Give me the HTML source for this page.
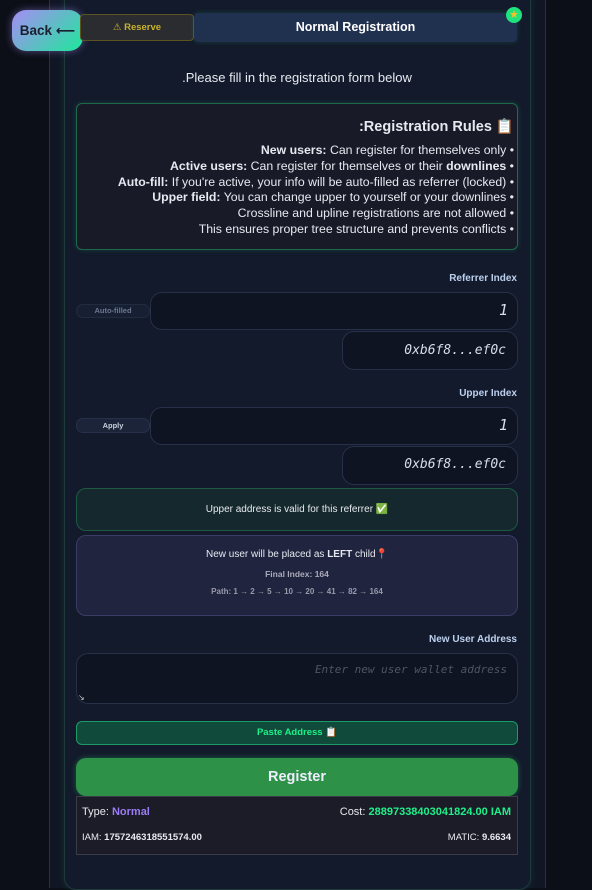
<!DOCTYPE html>
<html><head><meta charset="utf-8"><style>
*{box-sizing:border-box;margin:0;padding:0}
body{width:592px;height:883px;background:#0c0f17;font-family:"Liberation Sans","DejaVu Sans",sans-serif;position:relative;overflow:hidden;color:#e6e9f0}
.a{position:absolute}
.outer{left:49px;top:-2px;width:497px;height:890px;background:#111624;border-left:1px solid #2a3142;border-right:1px solid #2a3142}
.card{left:64px;top:-10px;width:467px;height:900px;background:#131a2b;border:1px solid #1f3a3a;border-radius:12px;box-shadow:0 0 8px rgba(30,200,130,.15)}
.r{text-align:right}
.inp{background:#0f1422;border:1px solid #263048;border-radius:12px}
.mono{font-family:"DejaVu Sans Mono","Liberation Mono",monospace;font-style:italic;color:#d8dde8}
.lbl{font-size:10px;font-weight:bold;color:#bcd0ee;right:75px}
</style></head><body>
<div class="a outer"></div>
<div class="a card"></div>
<div class="a" style="left:12px;top:10px;width:71px;height:41px;border-radius:14px;background:linear-gradient(135deg,#a68cf5,#1de89a);box-shadow:0 0 8px rgba(160,140,245,.5);color:#1a1f2e;font-weight:bold;font-size:13.5px;line-height:41px;text-align:center">Back ⟵</div>
<div class="a" style="left:80px;top:14px;width:114px;height:27px;border:1px solid #5c5320;border-radius:4px;background:#2a2c30;color:#c9b12a;font-size:9.5px;font-weight:bold;line-height:26px;text-align:center">⚠ Reserve</div>
<div class="a" style="left:194px;top:13px;width:323px;height:29px;background:#20304f;border-radius:4px;box-shadow:0 0 6px rgba(30,200,130,.2);color:#fff;font-size:12.5px;font-weight:bold;line-height:29px;text-align:center">Normal Registration</div>
<div class="a" style="left:506px;top:7px;width:16px;height:16px;border-radius:50%;background:#1de27e;font-size:11px;line-height:16px;text-align:center;color:#f6c12a">★</div>
<div class="a" style="left:76px;width:442px;top:70px;text-align:center;font-size:13px">.Please fill in the registration form below</div>
<div class="a" style="left:76px;top:103px;width:442px;height:147px;background:#181b27;border:1px solid #1e6a48;border-radius:6px;box-shadow:0 0 6px rgba(30,200,130,.2)"></div>
<div class="a r" style="right:78px;top:118px;font-size:14.5px;font-weight:bold">:Registration Rules 📋</div>
<div class="a r" style="right:78px;top:143px;font-size:12.3px;line-height:15.8px;white-space:nowrap">
<b>New users:</b> Can register for themselves only •<br>
<b>Active users:</b> Can register for themselves or their <b>downlines</b> •<br>
<b>Auto-fill:</b> If you're active, your info will be auto-filled as referrer (locked) •<br>
<b>Upper field:</b> You can change upper to yourself or your downlines •<br>
Crossline and upline registrations are not allowed •<br>
This ensures proper tree structure and prevents conflicts •</div>
<div class="a lbl" style="top:273px">Referrer Index</div>
<div class="a" style="left:76px;top:304px;width:74px;height:14px;border-radius:7px;background:#172033;border:1px solid #222c40;font-size:7.5px;color:#6c7690;text-align:center;line-height:12px;font-weight:bold">Auto-filled</div>
<div class="a inp" style="left:150px;top:292px;width:368px;height:38px"></div>
<div class="a mono" style="right:84px;top:301px;font-size:15px">1</div>
<div class="a inp" style="left:342px;top:331px;width:176px;height:39px"></div>
<div class="a mono" style="right:86px;top:343px;font-size:13px">0xb6f8...ef0c</div>
<div class="a lbl" style="top:388px">Upper Index</div>
<div class="a" style="left:76px;top:418px;width:74px;height:15px;border-radius:7px;background:#1b2438;border:1px solid #27314a;font-size:7.5px;color:#c8d0e0;text-align:center;line-height:13px;font-weight:bold">Apply</div>
<div class="a inp" style="left:150px;top:407px;width:368px;height:38px"></div>
<div class="a mono" style="right:84px;top:416px;font-size:15px">1</div>
<div class="a inp" style="left:342px;top:446px;width:176px;height:39px"></div>
<div class="a mono" style="right:86px;top:457px;font-size:13px">0xb6f8...ef0c</div>
<div class="a" style="left:76px;top:488px;width:442px;height:43px;background:#15282d;border:1px solid #1d5a40;border-radius:10px;font-size:10px;text-align:center;line-height:41px">Upper address is valid for this referrer ✅</div>
<div class="a" style="left:76px;top:535px;width:442px;height:81px;background:#20243e;border:1px solid #3a3d66;border-radius:10px;text-align:center">
<div style="font-size:10px;margin-top:13px">New user will be placed as <b>LEFT</b> child📍</div>
<div style="font-size:8.5px;color:#aab;margin-top:9px"><b>Final Index: 164</b></div>
<div style="font-size:8px;color:#99a;margin-top:8px;font-weight:bold">Path: 1 → 2 → 5 → 10 → 20 → 41 → 82 → 164</div></div>
<div class="a lbl" style="top:634px">New User Address</div>
<div class="a inp" style="left:76px;top:653px;width:442px;height:51px"></div>
<div class="a" style="right:85px;top:663px;font-family:'DejaVu Sans Mono',monospace;font-style:italic;font-size:11px;color:#4e5566">Enter new user wallet address</div>
<div class="a" style="left:78px;top:693px;font-size:8px;color:#ccc">↘</div>
<div class="a" style="left:76px;top:721px;width:442px;height:24px;background:#0f4a3a;border:1px solid #1d9a66;border-radius:6px;color:#1ef08a;font-size:9.5px;font-weight:bold;text-align:center;line-height:22px">Paste Address 📋</div>
<div class="a" style="left:76px;top:758px;width:442px;height:38px;background:#2d9147;border-radius:10px;box-shadow:0 0 6px rgba(40,220,120,.35);color:#eef;font-size:14.5px;font-weight:bold;text-align:center;line-height:38px">Register</div>
<div class="a" style="left:76px;top:796px;width:442px;height:59px;background:#1b1c27;border:1px solid #3a3c48"></div>
<div class="a" style="left:82px;top:806px;font-size:11px">Type: <b style="color:#9b7cf5">Normal</b></div>
<div class="a" style="right:81px;top:806px;font-size:11px">Cost: <b style="color:#1ef08a">28897338403041824.00 IAM</b></div>
<div class="a" style="left:82px;top:832px;font-size:9.5px">IAM: <b>1757246318551574.00</b></div>
<div class="a" style="right:81px;top:832px;font-size:9.5px">MATIC: <b>9.6634</b></div>
</body></html>
